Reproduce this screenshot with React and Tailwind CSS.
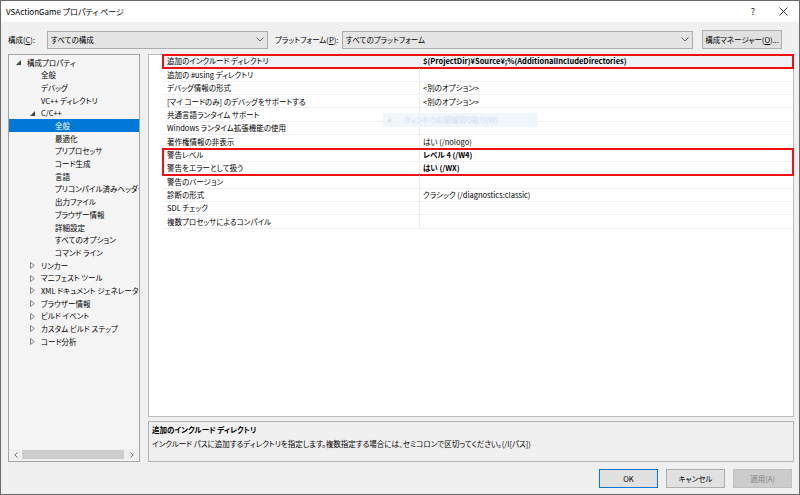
import React from 'react';

const tree = [
  { label: '構成プロパティ', level: 0, toggle: 'open' },
  { label: '全般', level: 1 },
  { label: 'デバッグ', level: 1 },
  { label: 'VC++ ディレクトリ', level: 1 },
  { label: 'C/C++', level: 1, toggle: 'open' },
  { label: '全般', level: 2, selected: true },
  { label: '最適化', level: 2 },
  { label: 'プリプロセッサ', level: 2 },
  { label: 'コード生成', level: 2 },
  { label: '言語', level: 2 },
  { label: 'プリコンパイル済みヘッダー', level: 2 },
  { label: '出力ファイル', level: 2 },
  { label: 'ブラウザー情報', level: 2 },
  { label: '詳細設定', level: 2 },
  { label: 'すべてのオプション', level: 2 },
  { label: 'コマンド ライン', level: 2 },
  { label: 'リンカー', level: 1, toggle: 'closed' },
  { label: 'マニフェスト ツール', level: 1, toggle: 'closed' },
  { label: 'XML ドキュメント ジェネレーター', level: 1, toggle: 'closed' },
  { label: 'ブラウザー情報', level: 1, toggle: 'closed' },
  { label: 'ビルド イベント', level: 1, toggle: 'closed' },
  { label: 'カスタム ビルド ステップ', level: 1, toggle: 'closed' },
  { label: 'コード分析', level: 1, toggle: 'closed' },
];

const props = [
  ['追加のインクルード ディレクトリ', '$(ProjectDir)¥Source¥;%(AdditionalIncludeDirectories)', true],
  ['追加の #using ディレクトリ', ''],
  ['デバッグ情報の形式', '<別のオプション>'],
  ['[マイ コードのみ] のデバッグをサポートする', '<別のオプション>'],
  ['共通言語ランタイム サポート', ''],
  ['Windows ランタイム拡張機能の使用', ''],
  ['著作権情報の非表示', 'はい (/nologo)'],
  ['警告レベル', 'レベル 4 (/W4)', true],
  ['警告をエラーとして扱う', 'はい (/WX)', true],
  ['警告のバージョン', ''],
  ['診断の形式', 'クラシック (/diagnostics:classic)'],
  ['SDL チェック', ''],
  ['複数プロセッサによるコンパイル', ''],
];

function Chevron() {
  return (
    <svg width="8" height="5" viewBox="0 0 8 5" className="shrink-0">
      <polyline points="0.5,0.5 4,4 7.5,0.5" fill="none" stroke="#555" strokeWidth="0.9" />
    </svg>
  );
}

function Toggle({ kind }) {
  if (kind === 'open') {
    return (
      <svg width="5" height="5" viewBox="0 0 5 5">
        <polygon points="5,0 5,5 0,5" fill="#444" />
      </svg>
    );
  }
  return (
    <svg width="5" height="7" viewBox="0 0 5 7">
      <polygon points="0.5,0.5 4.3,3.5 0.5,6.5" fill="none" stroke="#666" strokeWidth="0.8" />
    </svg>
  );
}

function PropRow({ name, value, bold, first }) {
  return (
    <div className={`flex h-[13.36px] border-b border-[#f0f0f0] items-center ${first ? 'bg-[#eff3f8]' : ''}`}>
      <div className="w-[257px] h-full flex items-center pl-[4px] border-r border-[#ececec] whitespace-nowrap overflow-hidden">
        {name}
      </div>
      <div className={`flex-1 h-full flex items-center pl-[3px] whitespace-nowrap ${bold ? 'font-bold' : ''}`}>
        {value}
      </div>
    </div>
  );
}

function Button({ children, variant }) {
  const styles = {
    default: 'border-[#0078d7] bg-[#e1e1e1] text-black',
    normal: 'border-[#adadad] bg-[#e1e1e1] text-black',
    disabled: 'border-[#bfbfbf] bg-[#cccccc] text-[#838383]',
  };
  return (
    <div className={`w-[59px] h-[19px] border flex items-center justify-center ${styles[variant]}`}>
      {children}
    </div>
  );
}

export default function App() {
  return (
    <div className="relative w-[800px] h-[495px] bg-[#f0f0f0] border border-[#6a6a6a] flex flex-col overflow-hidden text-[7.5px] text-black leading-none font-['Noto_Sans_CJK_JP',sans-serif] [font-feature-settings:'palt']">
      {/* title bar */}
      <div className="h-[21px] bg-white flex items-center shrink-0">
        <span className="pl-[5px] text-[8px]">VSActionGame プロパティ ページ</span>
        <div className="ml-auto flex items-center">
          <div className="w-[30px] flex justify-center text-[9px] text-[#222]">?</div>
          <div className="w-[30px] mr-[1px] flex justify-center">
            <svg width="9" height="9" viewBox="0 0 9 9">
              <path d="M0.5 0.5 L8.5 8.5 M8.5 0.5 L0.5 8.5" stroke="#222" strokeWidth="0.9" />
            </svg>
          </div>
        </div>
      </div>

      {/* configuration / platform selectors */}
      <div className="mt-[8px] h-[19px] flex items-center pl-[7px] shrink-0">
        <div className="w-[39px]">
          構成(<span className="underline">C</span>):
        </div>
        <div className="w-[221px] h-[18px] border border-[#acacac] bg-[#e5e5e5] flex items-center pl-[3px] pr-[3px]">
          <span className="flex-1">すべての構成</span>
          <Chevron />
        </div>
        <div className="w-[74px] pl-[7px]">
          プラットフォーム(<span className="underline">P</span>):
        </div>
        <div className="w-[351px] h-[18px] border border-[#acacac] bg-[#e5e5e5] flex items-center pl-[3px] pr-[3px]">
          <span className="flex-1">すべてのプラットフォーム</span>
          <Chevron />
        </div>
        <div className="ml-[9px] w-[80px] h-[19px] border border-[#adadad] bg-[#e1e1e1] flex items-center justify-center">
          構成マネージャー(<span className="underline">O</span>)...
        </div>
      </div>

      {/* tree + property grid */}
      <div className="mt-[5px] h-[408px] flex pl-[7px] shrink-0">
        <div className="w-[132px] h-full border border-[#a5a5a5] bg-[#f5f5f5] flex flex-col overflow-hidden">
          <div className="flex-1 pt-[1px] whitespace-nowrap overflow-hidden">
            {tree.map((item, i) => (
              <div
                key={i}
                className={`h-[12.7px] flex items-center overflow-hidden ${item.selected ? 'bg-[#0078d7] text-white' : ''}`}
                style={{ paddingLeft: 7 + item.level * 14 }}
              >
                <div className="w-[11px] shrink-0 flex items-center">
                  {item.toggle && <Toggle kind={item.toggle} />}
                </div>
                <span className="shrink-0">{item.label}</span>
              </div>
            ))}
          </div>
          <div className="h-[11px] mb-[1px] flex items-center bg-[#f0f0f0]">
            <div className="w-[13px] flex justify-center">
              <svg width="4" height="6" viewBox="0 0 4 6">
                <polyline points="3.5,0.5 0.8,3 3.5,5.5" fill="none" stroke="#606060" strokeWidth="0.9" />
              </svg>
            </div>
            <div className="w-[102px] h-[9px] bg-[#cdcdcd]" />
            <div className="flex-1 flex justify-center">
              <svg width="4" height="6" viewBox="0 0 4 6">
                <polyline points="0.5,0.5 3.2,3 0.5,5.5" fill="none" stroke="#606060" strokeWidth="0.9" />
              </svg>
            </div>
          </div>
        </div>

        <div className="ml-[8px] w-[646px] h-full flex flex-col">
          <div className="h-[363px] border border-[#bcbcbc] bg-white flex">
            <div className="w-[14px] shrink-0" />
            <div className="flex-1 flex flex-col">
              <div className="outline-2 outline-[#f01010] -outline-offset-1">
                <PropRow name={props[0][0]} value={props[0][1]} bold first />
              </div>
              {props.slice(1, 7).map(([n, v, b], i) => (
                <PropRow key={i} name={n} value={v} bold={b} />
              ))}
              <div className="outline-2 outline-[#f01010] -outline-offset-1">
                {props.slice(7, 9).map(([n, v, b], i) => (
                  <PropRow key={i} name={n} value={v} bold={b} />
                ))}
              </div>
              {props.slice(9).map(([n, v, b], i) => (
                <PropRow key={i} name={n} value={v} bold={b} />
              ))}
            </div>
          </div>
          <div className="mt-[4px] h-[41px] border border-[#b5b5b5] bg-[#f0f0f0] pl-[3px] pt-[4px] flex flex-col gap-[6px]">
            <div className="font-bold">追加のインクルード ディレクトリ</div>
            <div>
              インクルード パスに追加するディレクトリを指定します。複数指定する場合には、セミコロンで区切ってください。(/I[パス])
            </div>
          </div>
        </div>
      </div>

      {/* dialog buttons */}
      <div className="mt-[7px] h-[19px] flex justify-end gap-[8px] pr-[7px] shrink-0">
        <Button variant="default">OK</Button>
        <Button variant="normal">キャンセル</Button>
        <Button variant="disabled">適用(A)</Button>
      </div>

      {/* faint leftover of a floating snip hint */}
      <div className="absolute left-[382px] top-[112px] w-[155px] h-[14px] bg-[#edf4fc] opacity-80 flex items-center">
        <div className="ml-[5px] w-[3px] h-[3px] rounded-full bg-[#e6cccc]" />
        <span className="ml-[13px] text-[#cbd8e6]">ウィンドウの領域切り取り(W)</span>
      </div>
    </div>
  );
}
